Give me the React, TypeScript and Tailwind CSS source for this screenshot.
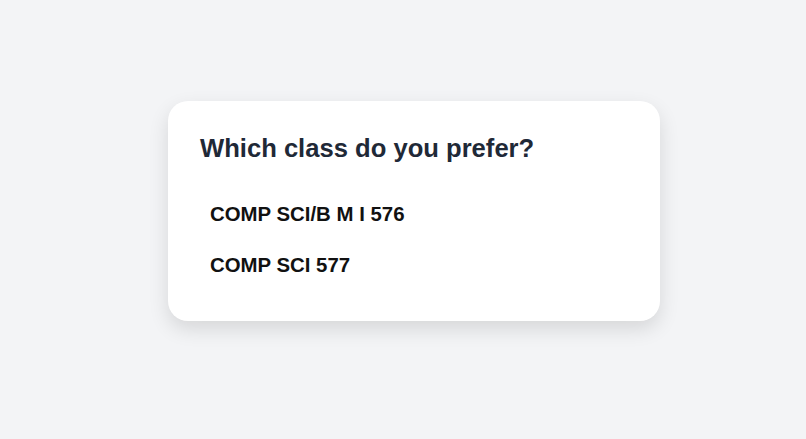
import React from "react";

export default function App() {
  const items = ["COMP SCI/B M I 576", "COMP SCI 577"];
  return (
    <div
      className="w-[806px] h-[439px] bg-[#f3f4f6] pt-[101px] pl-[168px]"
      style={{ fontFamily: '"Liberation Sans", Arial, sans-serif' }}
    >
      <div className="w-[492px] bg-white rounded-[20px] shadow-[0_8px_20px_rgba(0,0,0,0.12)] p-[32px]">
        <h1 className="text-[25.6px] leading-[31px] font-bold text-[#1f2937] mb-[26px]">
          Which class do you prefer?
        </h1>
        <div className="flex flex-col gap-[3px]">
          {items.map((t) => (
            <div
              key={t}
              className="px-[10px] py-[10px] text-[20.4px] leading-[28px] font-bold text-[#111111]"
            >
              {t}
            </div>
          ))}
        </div>
      </div>
    </div>
  );
}
